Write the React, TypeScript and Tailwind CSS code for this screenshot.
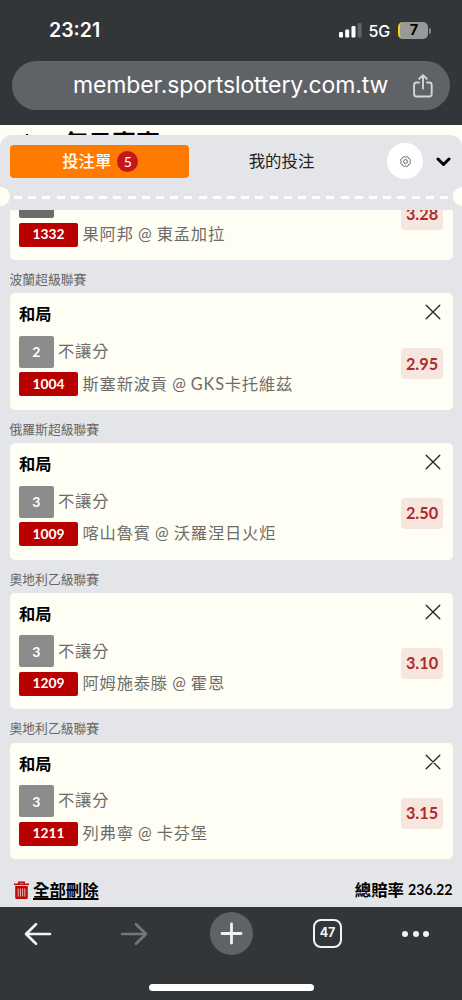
import { clsx } from "clsx";

type Bet = {
  league?: string;
  pick?: string;
  limit?: string;
  market?: string;
  code: string;
  match: string;
  odds: string;
  dark?: boolean;
};

const bets: Bet[] = [
  { code: "1332", match: "果阿邦 @ 東孟加拉", odds: "3.28", dark: true },
  { league: "波蘭超級聯賽", pick: "和局", limit: "2", market: "不讓分", code: "1004", match: "斯塞新波貢 @ GKS卡托維茲", odds: "2.95" },
  { league: "俄羅斯超級聯賽", pick: "和局", limit: "3", market: "不讓分", code: "1009", match: "喀山魯賓 @ 沃羅涅日火炬", odds: "2.50" },
  { league: "奧地利乙級聯賽", pick: "和局", limit: "3", market: "不讓分", code: "1209", match: "阿姆施泰滕 @ 霍恩", odds: "3.10" },
  { league: "奧地利乙級聯賽", pick: "和局", limit: "3", market: "不讓分", code: "1211", match: "列弗寧 @ 卡芬堡", odds: "3.15" },
];

const SignalIcon = () => (
  <svg width="23" height="15" viewBox="0 0 23 15" fill="#fff" aria-hidden>
    <rect x="0" y="9" width="4" height="5.5" rx="1.2" />
    <rect x="6.2" y="6.5" width="4" height="8" rx="1.2" />
    <rect x="12.5" y="3" width="4" height="11.5" rx="1.2" />
    <rect x="18.7" y="0" width="4" height="14.5" rx="1.2" fill="#606366" />
  </svg>
);

const ShareIcon = () => (
  <svg width="20" height="24" viewBox="0 0 20 24" fill="none" stroke="#d3d5d8" strokeWidth="1.9" strokeLinecap="round" strokeLinejoin="round" aria-hidden>
    <path d="M6 8.5H3.6A2.5 2.5 0 0 0 1.1 11v9a2.5 2.5 0 0 0 2.5 2.5h12.6a2.5 2.5 0 0 0 2.5-2.5v-9a2.5 2.5 0 0 0-2.5-2.5H14" />
    <path d="M10 14.5V1.5M6.3 4.8 10 1.3l3.7 3.5" />
  </svg>
);

const GearIcon = () => (
  <svg width="11" height="11" viewBox="0 0 24 24" fill="none" stroke="#444" strokeWidth="1.8" strokeLinejoin="round" aria-hidden>
    <path d="M21.5 12A4 4 0 0 1 18.7 18.7 4 4 0 0 1 12 21.5 4 4 0 0 1 5.3 18.7 4 4 0 0 1 2.5 12 4 4 0 0 1 5.3 5.3 4 4 0 0 1 12 2.5 4 4 0 0 1 18.7 5.3 4 4 0 0 1 21.5 12z" />
    <circle cx="12" cy="12" r="4.2" />
  </svg>
);

const TrashIcon = () => (
  <svg width="15" height="18" viewBox="0 0 15 18" fill="none" aria-hidden>
    <path d="M4.8 3V1.2h5.4V3" stroke="#bd0b0b" strokeWidth="1.5" />
    <path d="M0 3.3h15" stroke="#bd0b0b" strokeWidth="1.6" />
    <path d="M1.2 5h12.6v11.5a1.5 1.5 0 0 1-1.5 1.5H2.7a1.5 1.5 0 0 1-1.5-1.5z" fill="#bd0b0b" />
    <path d="M4.2 7.500v8M6.400 7.500v8M8.600 7.500v8M10.800 7.500v8" stroke="#f0caca" strokeWidth=".9" />
  </svg>
);

const ArrowIcon = ({ className }: { className?: string }) => (
  <svg width="28" height="24" viewBox="0 0 28 24" fill="none" stroke="currentColor" strokeWidth="2.6" strokeLinecap="round" strokeLinejoin="round" className={className} aria-hidden>
    <path d="M26 12H2M12 2.200 2 12l10 9.800" />
  </svg>
);

function BrowserHeader() {
  return (
    <header className="h-[125px] shrink-0 bg-[#333639] px-3">
      <div className="flex h-[61px] items-center pl-[37px] pr-[19px] text-white">
        <span className="flex-1 pt-px font-['Inter'] text-[19.5px] font-semibold leading-none">23:21</span>
        <SignalIcon />
        <span className="ml-[7px] pt-px font-['Inter'] text-[16px] font-medium tracking-[-0.2px]">5G</span>
        <span className="ml-[8px] flex h-[17px] w-[30px] items-center justify-center rounded-[5px] border-l-[2.5px] border-[#f4d60b] bg-[#98999b] font-['Inter'] text-[14.5px] font-bold leading-none text-black">
          7
        </span>
        <i className="ml-px h-[6px] w-[2px] rounded-r bg-[#85878a]" />
      </div>
      <div className="flex h-[49px] items-center justify-between rounded-full bg-[#5f6367] pl-[61px] pr-[17px]">
        <span className="whitespace-nowrap font-['Inter'] text-[23px] leading-none tracking-[-0.12px] text-white">
          member.sportslottery.com.tw
        </span>
        <ShareIcon />
      </div>
    </header>
  );
}

function SlipTabs() {
  return (
    <div className="flex h-[52px] items-end pl-[9.5px] pr-[11px]">
      <div className="mb-[9.5px] flex h-[33px] w-[179.5px] items-center justify-center gap-[6px] rounded bg-[#ff7a00] pl-[2px] text-[16.4px] font-medium text-white">
        投注單
        <span className="flex size-[21px] items-center justify-center rounded-full bg-[#c4161c] text-[14px] font-normal">5</span>
      </div>
      <div className="mb-[9.5px] flex h-[33px] flex-1 items-center justify-center pr-[13px] text-[16.4px] text-[#222]">
        我的投注
      </div>
      <div className="mb-[8px] flex size-9 items-center justify-center rounded-full bg-white">
        <GearIcon />
      </div>
      <svg width="15" height="10" viewBox="0 0 15 10" className="mb-[20px] ml-[13px]" fill="none" stroke="#000" strokeWidth="3" strokeLinecap="round" strokeLinejoin="round" aria-hidden>
        <path d="m2 2 5.500 5.500L13 2" />
      </svg>
    </div>
  );
}

// Ticket perforation between the tabs and the list
function Perforation() {
  return (
    <div className="flex h-[19px] items-center justify-between overflow-hidden">
      <i className="h-[19px] w-[9.5px] rounded-r-full bg-[#fffef5]" />
      <i className="mt-[2px] h-[3px] w-[434px] bg-[repeating-linear-gradient(90deg,#fff_0_8px,transparent_8px_14.2px)]" />
      <i className="h-[19px] w-[9.5px] rounded-l-full bg-[#fffef5]" />
    </div>
  );
}

function BetCard({ bet }: { bet: Bet }) {
  return (
    <section className="h-[149.75px] shrink-0">
      <h3 className="h-[33.25px] pt-[11px] text-[12.8px] leading-[17px] text-[#666]">{bet.league}</h3>
      <div className="flex h-[116.5px] justify-between rounded-[5px] bg-[#fffef5] px-[9.5px]">
        <div>
          <p className="mt-[9px] h-[23px] text-[16.3px] font-bold leading-[23px] text-black">{bet.pick}</p>
          <div className="mt-[10.5px] flex h-8 items-center">
            <span
              className={clsx(
                "flex h-8 w-[34.5px] items-center justify-center rounded-[2px] text-[14px] font-bold text-white",
                bet.dark ? "bg-[#6b6b6b]" : "bg-[#8c8c8c]"
              )}
            >
              {bet.limit}
            </span>
            <span className="ml-[4.5px] pb-px text-[16.3px] tracking-[0.8px] text-[#6e6c69]">{bet.market}</span>
          </div>
          <div className="mt-[4.5px] flex h-[24px] items-center">
            <span className="flex h-[24px] w-[59px] items-center justify-center rounded-[2px] bg-[#b90000] text-[13.8px] font-bold text-white">
              {bet.code}
            </span>
            <span className="ml-[4.5px] whitespace-nowrap pb-px text-[16.3px] tracking-[0.8px] text-[#6e6c69] [word-spacing:-0.7px]">
              {bet.match}
            </span>
          </div>
        </div>
        <div className="flex flex-col items-end">
          <svg width="16" height="16" viewBox="0 0 16 16" className="mr-[2px] mt-[11px]" stroke="#222" strokeWidth="1.3" strokeLinecap="round" aria-hidden>
            <path d="M1.200 1.200 14.800 14.800M14.800 1.200 1.200 14.800" />
          </svg>
          <span className="mt-[28px] flex h-[31px] w-[42px] items-center justify-center rounded bg-[#f7e6e0] text-[16.3px] font-bold text-[#b12a2a]">
            {bet.odds}
          </span>
        </div>
      </div>
    </section>
  );
}

function BrowserToolbar() {
  return (
    <footer className="h-[93px] shrink-0 bg-[#333639]">
      <div className="flex h-[53px] items-center pl-[23.5px]">
        <ArrowIcon className="text-[#f1f3f4]" />
        <ArrowIcon className="ml-[68.5px] rotate-180 text-[#74777a]" />
        <span className="ml-[61.5px] flex size-[43px] items-center justify-center rounded-full bg-[#5f6367]">
          <svg width="23" height="23" viewBox="0 0 23 23" stroke="#f1f3f4" strokeWidth="2.8" strokeLinecap="round" aria-hidden>
            <path d="M11.500 2v19M2 11.500h19" />
          </svg>
        </span>
        <span className="ml-[60.5px] flex size-[29px] items-center justify-center rounded-[8px] border-2 border-[#f1f3f4] font-['Inter'] text-[12.5px] font-bold text-[#f1f3f4]">
          47
        </span>
        <span className="ml-[60px] flex gap-[4.5px]">
          <i className="size-[6px] rounded-full bg-[#f1f3f4]" />
          <i className="size-[6px] rounded-full bg-[#f1f3f4]" />
          <i className="size-[6px] rounded-full bg-[#f1f3f4]" />
        </span>
      </div>
      <div className="mx-auto mt-[24px] h-[7px] w-[165px] rounded-full bg-white" />
    </footer>
  );
}

export default function App() {
  return (
    <div className="flex h-[1000px] w-[462px] flex-col overflow-hidden bg-[#e4e5e8] font-['Lato','Noto_Sans_CJK_TC',sans-serif]">
      <BrowserHeader />
      <main className="flex min-h-0 flex-1 flex-col bg-[#fffef5]">
        <div className="flex h-[10px] shrink-0 items-start overflow-hidden pl-[26px]">
          <i className="mt-[9px] h-px w-[2px] bg-black" />
          <h1 className="ml-[36px] mt-[1px] text-[24px] font-bold leading-[33px] text-black">每日賽事</h1>
        </div>
        <div className="flex min-h-0 flex-1 flex-col rounded-t-[12px] bg-[#e4e5e8]">
          <SlipTabs />
          <Perforation />
          {/* scrolled list, anchored to its last card */}
          <div className="mt-[4px] flex h-[649px] flex-col justify-end overflow-hidden px-[9.5px]">
            {bets.map((bet) => (
              <BetCard key={bet.code} bet={bet} />
            ))}
          </div>
          <div className="flex flex-1 items-center pl-[14px] pr-[9.5px] pt-[14px] font-bold text-black">
            <TrashIcon />
            <span className="ml-[4px] flex-1 text-[16.4px] leading-6 underline decoration-2 underline-offset-2">全部刪除</span>
            <span className="mr-[4px] text-[16.4px] leading-6">總賠率</span>
            <span className="text-[14.2px]">236.22</span>
          </div>
        </div>
      </main>
      <BrowserToolbar />
    </div>
  );
}
